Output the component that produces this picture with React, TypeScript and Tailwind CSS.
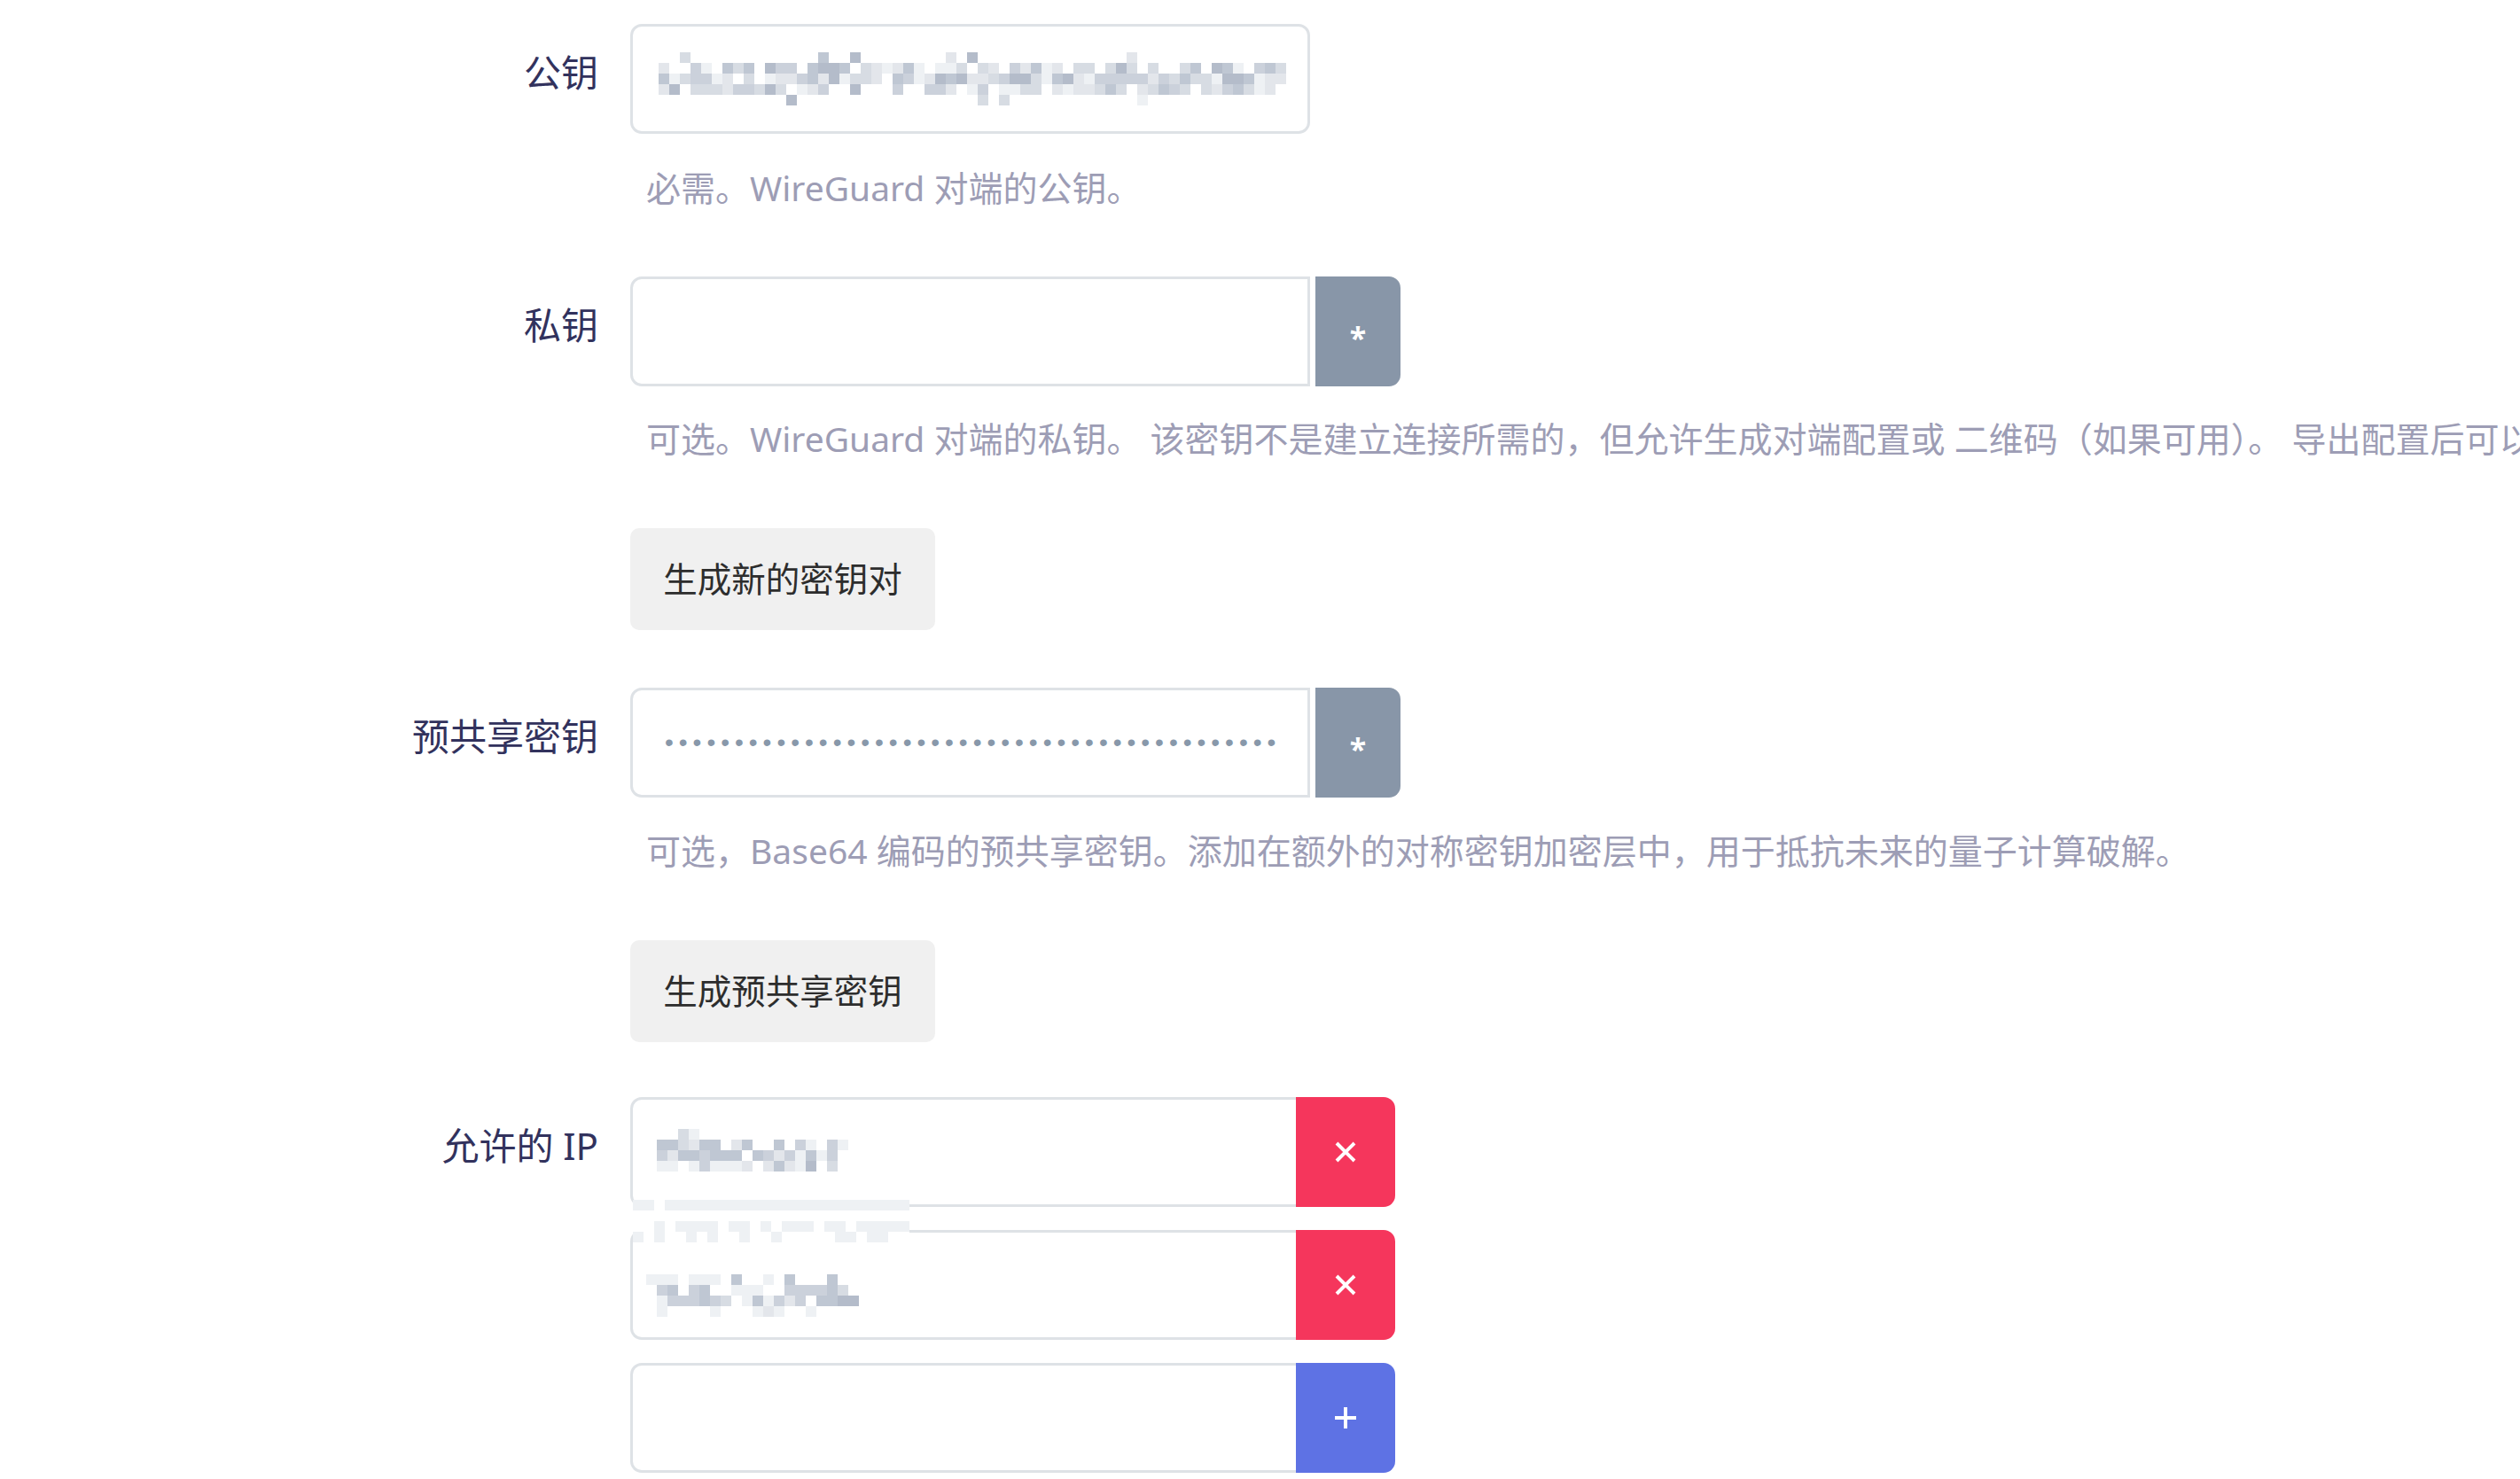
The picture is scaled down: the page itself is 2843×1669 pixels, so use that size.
import type { ReactNode } from "react"

const FONT = { fontFamily: '"Noto Sans", "Noto Sans CJK SC", sans-serif' }

// small seeded generator so the blurred values look the same on every run
const seeded = (seed: number) => {
  let s = seed
  return () => {
    s = (s * 9301 + 49297) % 233280
    return s / 233280
  }
}

const shade = (level: number) => {
  if (level <= 0) return "transparent"
  const t = Math.min(level, 7) / 7
  const mix = (a: number, b: number) => Math.round(a + (b - a) * t)
  return `rgb(${mix(250, 168)},${mix(251, 178)},${mix(252, 194)})`
}

const Mosaic = ({ rows, cell = 12 }: { rows: string[]; cell?: number }) => {
  const cols = Math.max(...rows.map((r) => r.length))
  return (
    <svg width={cols * cell} height={rows.length * cell} className="block">
      {rows.map((row, y) =>
        row.split("").map((c, x) => (
          <rect
            key={`${x}-${y}`}
            x={x * cell}
            y={y * cell}
            width={cell}
            height={cell}
            fill={shade(Number(c))}
          />
        ))
      )}
    </svg>
  )
}

const randomRows = (seed: number, cols: number, weights: number[], max = 6) => {
  const rnd = seeded(seed)
  return weights.map((w) =>
    Array.from({ length: cols }, () => {
      const r = rnd()
      if (r > w) return "0"
      return String(1 + Math.floor(rnd() * max))
    }).join("")
  )
}

const PUBLIC_KEY_ROWS = randomRows(17, 59, [0.12, 0.75, 0.95, 0.75, 0.12])

const IP_ONE = [
  "003100000000000000",
  "553255025005041041",
  "42554555054241514",
  "11014111202521603",
]

const IP_TWO = [
  "111011105001050005",
  "0450450011100444453",
  "01444543015142405566",
  "01000010001210010",
]

const GHOST = [
  "11011111111111111111111111",
  "00000000000000000000000000",
  "00101111011010111011011111",
  "10100101001001000001101100",
]

const Field = ({ label, children }: { label: string; children: ReactNode }) => (
  <div className="flex items-start">
    <label className="w-[675px] shrink-0 pt-[30px] text-right text-[42px] leading-[50px] text-[#32325d]">
      {label}
    </label>
    <div className="ml-[36px]">{children}</div>
  </div>
)

const Help = ({ children }: { children: ReactNode }) => (
  <p className="ml-[729px] whitespace-nowrap text-[39px] leading-[52px] text-[#9d9db5]">
    {children}
  </p>
)

const GrayButton = ({ children }: { children: ReactNode }) => (
  <button className="ml-[711px] flex h-[115px] w-[344px] items-center justify-center rounded-[10px] bg-[#f0f0f0] text-[38.5px] text-[#2d2d2d]">
    {children}
  </button>
)

const StarButton = () => (
  <button className="ml-[6px] flex h-[124px] w-[96px] items-center justify-center rounded-r-[13px] bg-[#8896a8] pt-[14px] text-[34px] font-bold text-white">
    *
  </button>
)

const CrossIcon = () => (
  <svg width="26" height="26" viewBox="0 0 26 26">
    <path d="M3 3 L23 23 M23 3 L3 23" stroke="white" strokeWidth="4" />
  </svg>
)

const PlusIcon = () => (
  <svg width="28" height="28" viewBox="0 0 28 28">
    <path d="M14 2 V26 M2 14 H26" stroke="white" strokeWidth="4" />
  </svg>
)

const IpRow = ({
  mosaic,
  offset,
  add,
}: {
  mosaic?: string[]
  offset?: string
  add?: boolean
}) => (
  <div className="flex h-[124px]">
    <div className="flex h-full w-[751px] items-center rounded-l-[13px] border-[3px] border-r-0 border-[#dee2e6] bg-white">
      {mosaic && (
        <div className={offset}>
          <Mosaic rows={mosaic} />
        </div>
      )}
    </div>
    <button
      className={
        add
          ? "flex h-full w-[112px] items-center justify-center rounded-r-[13px] bg-[#5e72e4]"
          : "flex h-full w-[112px] items-center justify-center rounded-r-[13px] bg-[#f5365c]"
      }
    >
      {add ? <PlusIcon /> : <CrossIcon />}
    </button>
  </div>
)

export default function App() {
  return (
    <div className="min-h-screen w-full overflow-hidden bg-white pt-[27px]" style={FONT}>
      <Field label="公钥">
        <div className="flex h-[124px] w-[767px] items-center rounded-[13px] border-[3px] border-[#dee2e6] bg-white pl-[29px]">
          <Mosaic rows={PUBLIC_KEY_ROWS} />
        </div>
      </Field>
      <div className="mt-[35px]">
        <Help>必需。WireGuard 对端的公钥。</Help>
      </div>

      <div className="mt-[74px]">
        <Field label="私钥">
          <div className="flex">
            <div className="h-[124px] w-[767px] rounded-l-[13px] border-[3px] border-[#dee2e6] bg-white" />
            <StarButton />
          </div>
        </Field>
      </div>
      <div className="mt-[33px]">
        <Help>
          可选。WireGuard 对端的私钥。 该密钥不是建立连接所需的，但允许生成对端配置或 二维码（如果可用）。 导出配置后可以删除。
        </Help>
      </div>

      <div className="mt-[75px]">
        <GrayButton>生成新的密钥对</GrayButton>
      </div>

      <div className="mt-[65px]">
        <Field label="预共享密钥">
          <div className="flex">
            <div className="flex h-[124px] w-[767px] items-center rounded-l-[13px] border-[3px] border-[#dee2e6] bg-white pl-[36px]">
              <span
                className="text-[28px] tracking-[6px] text-[#8898aa]"
                style={{ fontFamily: '"Liberation Sans", sans-serif' }}
              >
                {"•".repeat(44)}
              </span>
            </div>
            <StarButton />
          </div>
        </Field>
      </div>
      <div className="mt-[34px]">
        <Help>可选，Base64 编码的预共享密钥。添加在额外的对称密钥加密层中，用于抵抗未来的量子计算破解。</Help>
      </div>

      <div className="mt-[75px]">
        <GrayButton>生成预共享密钥</GrayButton>
      </div>

      <div className="mt-[62px]">
        <Field label="允许的 IP">
          <div className="relative flex flex-col gap-[26px]">
            <IpRow mosaic={IP_ONE} offset="ml-[27px] -mt-[4px]" />
            <IpRow mosaic={IP_TWO} offset="ml-[15px] mt-[24px]" />
            <IpRow add />
            <div className="absolute left-[3px] top-[116px] bg-white">
              <Mosaic rows={GHOST} />
            </div>
          </div>
        </Field>
      </div>
    </div>
  )
}
